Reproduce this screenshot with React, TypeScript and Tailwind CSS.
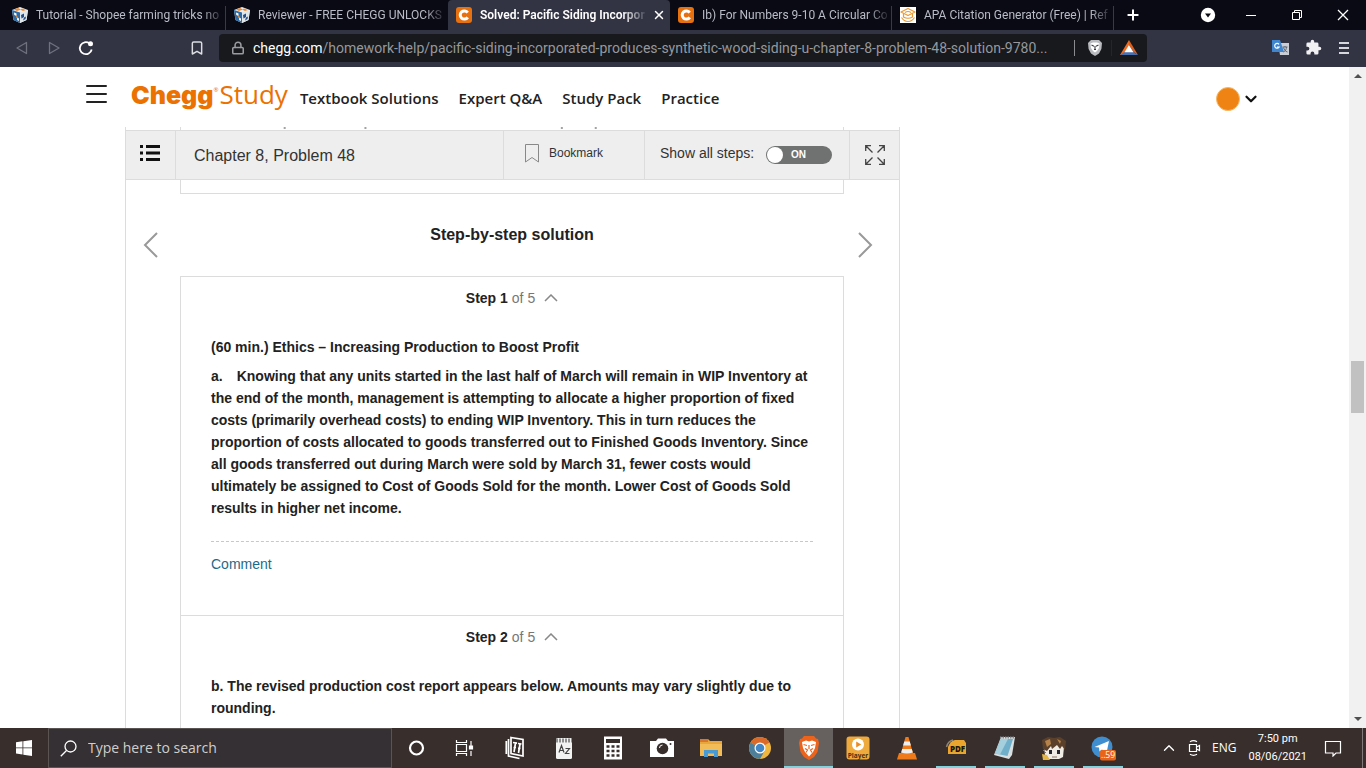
import React from "react";
import {
  Lock,
  Bookmark,
  ChevronUp,
  ChevronDown,
  X,
  Plus,
} from "lucide-react";

const ui = "font-['Open_Sans','Noto_Sans',sans-serif]";

function CubeIcon() {
  return (
    <svg viewBox="0 0 16 16" className="size-4 shrink-0" aria-hidden="true">
      <path d="M8 0L16 3L14.500 13L8 16L1.500 13L0 3z" fill="#e9eef2" />
      <path d="M0 3L8 5.500L8 16L1.500 13z" fill="#2d6ca6" />
      <path d="M8 5.500L16 3L14.500 13L8 16z" fill="#dfe6ea" />
      <path d="M2 2.500L6 1L9 2.500L5 4z" fill="#ef8a2c" />
      <path d="M10 1.500L14 3L11 4L8.500 2.700z" fill="#ef8a2c" />
      <path d="M2 5.500L4.500 6.500L4.500 9L2.300 8zM5 10.500L7 11.500L7 14L5 13z" fill="#fff" />
      <path d="M9 8L12 6.500L12 10L9.500 11.500zM12 10.500L14 9.500L13.500 12L11 13.500z" fill="#264d86" />
      <path d="M4 9L6 9.800L6 11.500L4 10.500z" fill="#ef8a2c" />
    </svg>
  );
}

function CheggIcon() {
  return (
    <svg viewBox="0 0 16 16" className="size-4 shrink-0" aria-hidden="true">
      <rect width="16" height="16" rx="3" fill="#e8710f" />
      <path d="M11.700 5.700A4.100 4.100 0 1 0 11.700 10.300" fill="none" stroke="#fff" strokeWidth="3" />
    </svg>
  );
}

function ScribbrIcon() {
  return (
    <svg viewBox="0 0 16 16" className="size-4 shrink-0" aria-hidden="true">
      <rect width="16" height="16" fill="#fff" />
      <g fill="none" stroke="#e99a35" strokeWidth="1.200" strokeLinejoin="round">
        <path d="M1 5L8 1.500L15 5L8 8.500z" />
        <path d="M5 5.500Q8 3.500 11 5.500M3.500 6.500v3.500Q8 12.500 12.500 10V6.500" />
        <path d="M1.500 10.500Q4 14.500 8 14.500Q12 14.500 14.500 10.500" />
      </g>
    </svg>
  );
}

const tabs = [
  { title: "Tutorial - Shopee farming tricks no", icon: <CubeIcon />, sep: true },
  { title: "Reviewer - FREE CHEGG UNLOCKS", icon: <CubeIcon />, sep: false },
  { title: "Solved: Pacific Siding Incorpor", icon: <CheggIcon />, active: true },
  { title: "Ib) For Numbers 9-10 A Circular Co", icon: <CheggIcon />, sep: true },
  { title: "APA Citation Generator (Free) | Ref", icon: <ScribbrIcon />, sep: true },
];

function TabStrip() {
  return (
    <div className="flex h-[30px] bg-[#0a0a15]">
      <div role="tablist" className="flex min-w-0">
        {tabs.map((t) => (
          <div
            key={t.title}
            className={
              t.active
                ? "flex w-[222px] min-w-0 items-center rounded-t bg-[#323444] pl-2 text-white"
                : "flex w-[222px] min-w-0 items-center pl-2 first:w-[226px] first:pl-3"
            }
          >
            <button role="tab" aria-selected={!!t.active} className="flex min-w-0 flex-1 items-center gap-2">
              {t.icon}
              <span
                className={
                  t.active
                    ? "flex-1 overflow-hidden whitespace-nowrap text-left font-['Roboto',sans-serif] text-[12px] font-semibold leading-5 [mask-image:linear-gradient(to_right,black_85%,transparent)]"
                    : "flex-1 overflow-hidden whitespace-nowrap text-left font-['Roboto',sans-serif] text-[12px] leading-5 text-[#b9bcc6] [mask-image:linear-gradient(to_right,black_88%,transparent)]"
                }
              >
                {t.title}
              </span>
            </button>
            {t.active ? (
              <button aria-label="Close tab" className="px-1">
                <X className="size-3.5" strokeWidth={2.5} />
              </button>
            ) : (
              <span className={t.sep ? "h-6 w-px self-end bg-[#3a3a42]" : "w-px"} />
            )}
          </div>
        ))}
      </div>
      <button aria-label="New tab" className="px-[11px] text-white">
        <Plus className="size-4" strokeWidth={3} />
      </button>
      <div className="flex flex-1 justify-end text-white">
        <button aria-label="Search tabs" className="px-3">
          <svg viewBox="0 0 16 16" className="size-4" aria-hidden="true">
            <circle cx="8" cy="8" r="7.200" fill="#fff" />
            <path d="M5 6.500h6L8 10.500z" fill="#0a0a15" />
          </svg>
        </button>
        <button aria-label="Minimize" className="flex w-[46px] items-center justify-center">
          <svg viewBox="0 0 12 12" className="size-3" aria-hidden="true"><path d="M1 6.500h10" stroke="#fff" /></svg>
        </button>
        <button aria-label="Restore" className="flex w-[46px] items-center justify-center">
          <svg viewBox="0 0 12 12" className="size-3" fill="none" stroke="#fff" aria-hidden="true">
            <path d="M1.500 3.500h7v7h-7zM3.500 3V1.500h7v7H9" />
          </svg>
        </button>
        <button aria-label="Close" className="flex w-[46px] items-center justify-center">
          <svg viewBox="0 0 12 12" className="size-3" aria-hidden="true"><path d="M1 1l10 10M11 1L1 11" stroke="#fff" strokeWidth="1.300" /></svg>
        </button>
      </div>
    </div>
  );
}

function AddressRow() {
  return (
    <div className="flex h-[37px] items-center bg-[#323444] pb-0.5">
      <div className="flex w-[219px] shrink-0 items-center pl-[14px]">
        <button aria-label="Back">
          <svg viewBox="0 0 16 16" className="size-4" aria-hidden="true"><path d="M12.500 2.500v11L3 8z" fill="none" stroke="#6f717e" strokeWidth="1.300" strokeLinejoin="round" /></svg>
        </button>
        <button aria-label="Forward" className="ml-4">
          <svg viewBox="0 0 16 16" className="size-4" aria-hidden="true"><path d="M3.500 2.500v11L13 8z" fill="none" stroke="#6f717e" strokeWidth="1.300" strokeLinejoin="round" /></svg>
        </button>
        <button aria-label="Reload" className="ml-4">
          <svg viewBox="0 0 16 16" className="size-4" aria-hidden="true">
            <path d="M11.500 3.400A6 6 0 1 0 13.700 9.500" fill="none" stroke="#fff" strokeWidth="1.800" />
            <circle cx="12.500" cy="3.800" r="2.500" fill="#fff" />
          </svg>
        </button>
        <button aria-label="Bookmark this page" className="ml-auto mr-[14px]">
          <Bookmark className="size-4 text-[#dcdde2]" strokeWidth={2.2} />
        </button>
      </div>
      <div className="flex h-7 min-w-0 max-w-[928px] flex-1 items-center rounded bg-[#17191d] pl-3 pr-[5px]">
        <Lock className="size-3.5 shrink-0 text-[#9a9ca2]" strokeWidth={2.6} />
        <span className="ml-2 min-w-0 flex-1 whitespace-nowrap font-['Roboto',sans-serif] text-[14px] leading-5 text-[#96989d]">
          <span className="text-white">chegg.com</span>
          /homework-help/pacific-siding-incorporated-produces-synthetic-wood-siding-u-chapter-8-problem-48-solution-9780...
        </span>
        <span className="mx-2 h-4 w-px bg-[#8b8c90]" />
        <button aria-label="Brave Shields" className="mx-1">
          <svg viewBox="0 0 16 18" className="h-[18px] w-4" aria-hidden="true">
            <path d="M4 1h8l3 3-.6 6L12 14.500 8 17 4 14.500 1.600 10 1 4z" fill="#b9bbc0" />
            <path d="M3.500 4.500L6 3.500h4l2.500 1L12 9l-2 3-2 1.500L6 12 4 9z" fill="#fff" />
            <path d="M4.500 6L7 7.200M11.500 6L9 7.200M7 10.500h2M8 7v3" stroke="#3a3c42" strokeWidth="1.100" />
          </svg>
        </button>
        <span className="mx-1 h-4 w-px bg-[#24262b]" />
        <button aria-label="Brave Rewards" className="mx-1">
          <svg viewBox="0 0 18 16" className="h-4 w-[18px]" aria-hidden="true">
            <path d="M9 0L0 15h9V5z" fill="#ef6b1f" />
            <path d="M9 0v5l4.500 7L18 15z" fill="#d9601f" />
            <path d="M0 15l4.500-3h9L18 15z" fill="#4a6fae" />
            <path d="M9 5l4.500 7.200h-9z" fill="#fff" />
          </svg>
        </button>
      </div>
      <div className="ml-auto flex items-center gap-4 pr-4">
        <button aria-label="Translate">
          <svg viewBox="0 0 17 17" className="size-[17px]" aria-hidden="true">
            <path d="M6 4h11v12H8z" fill="#c9ced6" />
            <path d="M0 1h8l4 12H0z" fill="#3f86cf" />
            <path d="M7 5.300A2.400 2.400 0 1 0 7.200 8H5" fill="none" stroke="#fff" strokeWidth="1.200" />
            <path d="M10.500 8h5M13 7v1M11.500 13c2-1 3-3 3-5M11.500 8.500c.5 2 2 4 4 4.500" fill="none" stroke="#5f6570" />
          </svg>
        </button>
        <button aria-label="Extensions">
          <svg viewBox="0 0 24 24" className="size-[17px]" fill="#f1f1f4" aria-hidden="true">
            <path d="M20.500 11H19V7a2 2 0 0 0-2-2h-4V3.500a2.500 2.500 0 0 0-5 0V5H4a2 2 0 0 0-2 2v3.800h1.500a2.700 2.700 0 0 1 0 5.400H2V20a2 2 0 0 0 2 2h3.800v-1.500a2.700 2.700 0 0 1 5.400 0V22H17a2 2 0 0 0 2-2v-4h1.500a2.500 2.500 0 0 0 0-5z" />
          </svg>
        </button>
        <button aria-label="Menu">
          <svg viewBox="0 0 12 14" className="h-[14px] w-3" aria-hidden="true"><path d="M1 2h10M1 7h10M1 12h10" stroke="#d7d8de" strokeWidth="1.800" /></svg>
        </button>
      </div>
    </div>
  );
}

function SiteHeader() {
  return (
    <header className={`flex h-[60px] shrink-0 items-center bg-white pl-[86px] pr-[89px] ${ui}`}>
      <button aria-label="Open menu">
        <svg viewBox="0 0 21 20" className="mb-1.5 h-5 w-[21px]" aria-hidden="true"><path d="M1 2h19M1 10h19M1 18h19" stroke="#222" strokeWidth="2" strokeLinecap="round" /></svg>
      </button>
      <a href="#home" className="ml-6 flex items-baseline pb-1.5 text-[26px] leading-8 text-[#eb7100]">
        <span className="font-['Inter',sans-serif] text-[25px] font-black">Chegg</span>
        <span className="w-[6px] self-start pt-1 text-[6px] leading-4">®</span>
        <span>Study</span>
      </a>
      <nav className="ml-3 flex gap-5 pt-0.5 text-[15px] font-semibold leading-6 text-[#222]">
        <a href="#textbooks">Textbook Solutions</a>
        <a href="#expert">Expert Q&amp;A</a>
        <a href="#pack">Study Pack</a>
        <a href="#practice">Practice</a>
      </nav>
      <button aria-label="Account" className="ml-auto flex items-center gap-0.5 pt-1">
        <span className="size-6 rounded-full border border-[#f5b766] bg-[#ef8414]" />
        <ChevronDown className="size-[18px] text-[#111]" strokeWidth={3} />
      </button>
    </header>
  );
}

function ProblemBar() {
  return (
    <div className="flex h-[50px] shrink-0 items-stretch border border-[#dcdcdc] bg-[#eeeeee] text-[#333]">
      <button aria-label="Table of contents" className="flex w-[50px] items-center justify-center border-r border-[#dcdcdc] pr-0.5">
        <svg viewBox="0 0 20 16" className="mb-1 h-4 w-5" aria-hidden="true">
          <path d="M0 1.500h3M0 8h3M0 14.500h3M6 1.500h14M6 8h14M6 14.500h14" stroke="#111" strokeWidth="3" />
        </svg>
      </button>
      <h1 className="flex flex-1 items-center pl-[18px] pt-0.5 text-[16px] leading-6">Chapter 8, Problem 48</h1>
      <button className="flex w-[141px] items-center border-l border-[#dcdcdc] pb-1 pl-[21px] text-[12px] leading-5">
        <svg viewBox="0 0 14 19" className="mr-[10px] h-[19px] w-[14px]" aria-hidden="true"><path d="M.5.500h13v17.500L7 13.500.5 18z" fill="none" stroke="#888" /></svg>
        Bookmark
      </button>
      <label className="flex w-[205px] items-center justify-between border-l border-[#dcdcdc] pl-[15px] pr-[17px] text-[14px] leading-5">
        <span className="pb-1">Show all steps:</span>
        <input type="checkbox" role="switch" defaultChecked className="peer sr-only" />
        <span className="flex h-[18px] w-[66px] items-center rounded-full bg-[#6f7271] p-px text-[10px] font-bold text-white">
          <span className="mr-2 size-4 rounded-full bg-white" />
          ON
        </span>
      </label>
      <button aria-label="Full screen" className="flex w-[50px] items-center justify-center border-l border-[#dcdcdc]">
        <svg viewBox="0 0 20 20" className="size-5" fill="none" stroke="#444" strokeWidth="1.300" aria-hidden="true">
          <path d="M7.500 7.500L.8.800M.7 6V.7H6M12.500 7.500L19.200.8M14 .7h5.300V6M7.500 12.500L.8 19.200M.7 14v5.300H6M12.500 12.500l6.700 6.700M14 19.300h5.300V14" />
        </svg>
      </button>
    </div>
  );
}

function StepHeading({ n }: { n: number }) {
  return (
    <h3 className="flex h-[42px] items-center justify-center">
      <button className="flex items-center text-[14px] font-normal leading-5 text-[#777]">
        <span className="mr-1 font-bold text-[#222]">Step {n}</span>of 5
        <svg viewBox="0 0 14 8" className="ml-[9px] h-2 w-[14px]" aria-hidden="true"><path d="M1 7l6-6 6 6" fill="none" stroke="#888" strokeWidth="1.500" /></svg>
      </button>
    </h3>
  );
}

const answer = [
  "the end of the month, management is attempting to allocate a higher proportion of fixed",
  "costs (primarily overhead costs) to ending WIP Inventory. This in turn reduces the",
  "proportion of costs allocated to goods transferred out to Finished Goods Inventory. Since",
  "all goods transferred out during March were sold by March 31, fewer costs would",
  "ultimately be assigned to Cost of Goods Sold for the month. Lower Cost of Goods Sold",
  "results in higher net income.",
];

function Page() {
  return (
    <main className="flex min-w-0 flex-1 flex-col overflow-hidden bg-white font-['Liberation_Sans',Arial,sans-serif]">
      <SiteHeader />
      <div className="ml-[125px] flex w-[775px] max-w-full flex-1 flex-col">
        <div className="h-[3px] shrink-0 border-x border-[#dcdcdc] pl-[54px] pr-[55px]">
          <div className="h-full border-x border-[#dcdcdc]">
            <svg viewBox="0 0 664 3" className="h-[3px] w-full" aria-hidden="true"><path d="M103 1h2M184 1h2M381 1h2M415 1h2" stroke="#444" /></svg>
          </div>
        </div>
        <ProblemBar />
        <div className="flex flex-1 items-start border-x border-[#dcdcdc]">
          <button aria-label="Previous problem" className="w-[54px] pl-[17px] pt-[52px]">
            <svg viewBox="0 0 15 26" className="h-[26px] w-[15px]" aria-hidden="true"><path d="M14 1L2 13l12 12" fill="none" stroke="#999" strokeWidth="2" /></svg>
          </button>
          <div className="min-w-0 flex-1 text-[14px] leading-[22px] text-[#222]">
            <div className="h-[14px] border-x border-b border-[#dcdcdc]" />
            <h2 className="pb-[29px] pt-[29px] text-center text-[16px] font-bold leading-6">Step-by-step solution</h2>
            <section className="border border-[#dcdcdc] px-[30px] pb-10 font-bold">
              <StepHeading n={1} />
              <p className="pt-[17px]">(60 min.) Ethics – Increasing Production to Boost Profit</p>
              <p className="whitespace-nowrap pb-[22px] pt-[7px]">
                a.<span className="ml-[14px]">Knowing that any units started in the last half of March will remain in WIP Inventory at</span>
                {answer.map((line) => (
                  <React.Fragment key={line}>
                    <br />
                    {line}
                  </React.Fragment>
                ))}
              </p>
              <div className="border-t border-dashed border-[#c8c8c8] pt-[11px] font-normal">
                <a href="#comment" className="text-[#1c6b8c]">Comment</a>
              </div>
            </section>
            <section className="border-x border-[#dcdcdc] px-[30px] pb-10 font-bold">
              <StepHeading n={2} />
              <p className="whitespace-nowrap pt-[17px]">
                b. The revised production cost report appears below. Amounts may vary slightly due to
                <br />
                rounding.
              </p>
            </section>
          </div>
          <button aria-label="Next problem" className="w-[55px] pl-[14px] pt-[52px]">
            <svg viewBox="0 0 15 26" className="h-[26px] w-[15px]" aria-hidden="true"><path d="M1 1l12 12L1 25" fill="none" stroke="#999" strokeWidth="2" /></svg>
          </button>
        </div>
      </div>
    </main>
  );
}

function Scrollbar() {
  return (
    <div className="flex w-[17px] shrink-0 flex-col items-center bg-[#f1f1f1] py-[6px]" aria-hidden="true">
      <svg viewBox="0 0 8 5" className="h-[5px] w-2"><path d="M0 5l4-4 4 4z" fill="#505050" /></svg>
      <div className="h-[283px] shrink-0" />
      <div className="h-[52px] w-[13px] shrink-0 bg-[#c1c1c1]" />
      <svg viewBox="0 0 8 5" className="mt-auto h-[5px] w-2"><path d="M0 0l4 4 4-4z" fill="#505050" /></svg>
    </div>
  );
}

const apps: { name: string; state?: "active" | "open"; art: React.ReactNode }[] = [
  { name: "Cortana", art: <circle cx="11.500" cy="12" r="6.500" fill="none" stroke="#fff" strokeWidth="2.200" /> },
  {
    name: "Task View",
    art: (
      <g fill="none" stroke="#fff" strokeWidth="1.200">
        <path d="M2.500 8.500h10v7h-10zM2.500 4v2.500h10V4M2.500 20v-2.500h10V20M17 5v5M17 15v5" />
        <path d="M15.500 10h3v3h-3z" fill="#fff" />
      </g>
    ),
  },
  {
    name: "Solitaire",
    art: (
      <g fill="none" stroke="#fff" strokeWidth="1.700">
        <path d="M8 1.500l12 2V20L8 17.500z" />
        <path d="M5.500 3v17l11 2.500M3.300 5v13" />
        <path d="M10 6.500l4 .6M12.500 7l-1.500 9M15 7.500l3.500.5M17 8l-1.500 9M10.500 11.500h2.500M15 12.300h2.500" />
      </g>
    ),
  },
  {
    name: "Dictionary",
    art: (
      <>
        <rect x="4" y="2" width="16" height="21" rx="1.500" fill="#f2f2f2" />
        <path d="M4 4.500h16" stroke="#8e8e8e" strokeWidth="4" strokeDasharray="2 1" />
        <path d="M7 16.500l2.500-7 2.500 7M8 14.500h3M13.500 12.500h4l-4 5h4" fill="none" stroke="#444" strokeWidth="1.200" />
      </>
    ),
  },
  {
    name: "Calculator",
    art: (
      <>
        <rect x="3" y="0.500" width="18" height="23" fill="#fff" />
        <path d="M5 5h14" stroke="#382f2d" strokeWidth="4" />
        <path d="M5.500 10.500h13M5.500 15h13M5.500 19.500h13" stroke="#382f2d" strokeWidth="2.500" strokeDasharray="3 2" />
      </>
    ),
  },
  {
    name: "Camera",
    art: (
      <>
        <path d="M0 5h6l2-2.500h8L18 5h6v16H0z" fill="#fff" />
        <circle cx="12.500" cy="12.500" r="5.800" fill="#382f2d" />
        <path d="M9.500 12a3 3 0 0 1 3-3" stroke="#fff" fill="none" />
        <circle cx="20.500" cy="8" r="1" fill="#382f2d" />
      </>
    ),
  },
  {
    name: "File Explorer",
    art: (
      <>
        <path d="M1 3h8l2 2h12v15H1z" fill="#e9a63a" />
        <path d="M1 3h8v3H1z" fill="#d9772e" />
        <path d="M1 8h22v12H1z" fill="#f2bd58" />
        <path d="M5 21v-7h14v7h-4v-3.500H9V21z" fill="#4a9bd4" />
      </>
    ),
  },
  {
    name: "Chrome",
    art: (
      <>
        <circle cx="12" cy="12" r="11" fill="#f0b73f" />
        <path d="M12 12L2.500 6.500A11 11 0 0 1 21.500 6.500z" fill="#d96a2b" />
        <path d="M12 12L2.500 6.500A11 11 0 0 0 12 23l4.500-8z" fill="#4d7f9a" />
        <circle cx="12" cy="12" r="5.500" fill="#fff" />
        <circle cx="12" cy="12" r="4.300" fill="#4387c7" />
      </>
    ),
  },
  {
    name: "Brave",
    state: "active",
    art: (
      <>
        <path d="M7 0h10l2 2.500 2 .5 1 4-1.500 9L17 21l-5 3-5-3-3.500-5L2 7l1-4 2-.5z" fill="#ec641c" />
        <path d="M5 6l4-1.500 3 1 3-1L19 6l-1 6-2 4-4 4.500L8 16l-2-4z" fill="#fff" />
        <path d="M6.500 8.500l3.500 1M17.500 8.500l-3.500 1M12 9v4M8 12.500l2.500 1.500L9 16.500M16 12.500L13.500 14l1.500 2.500" stroke="#ec641c" strokeWidth="1.200" fill="none" />
      </>
    ),
  },
  {
    name: "Media Player",
    art: (
      <>
        <rect x="0.500" y="0.500" width="23" height="23" rx="3" fill="#efaa3d" />
        <circle cx="12" cy="8.500" r="6" fill="#fff" />
        <path d="M10.200 5.500v6l5-3z" fill="#ee8b20" />
        <text x="12" y="21.500" textAnchor="middle" fontSize="6.500" fontWeight="700" fill="#4b3210">Player</text>
      </>
    ),
  },
  {
    name: "VLC",
    art: (
      <>
        <path d="M4 17h16l2 6.500H2z" fill="#ee7a1a" />
        <path d="M10.500 1h3l5 18q-6.500 3-13 0z" fill="#ee7a1a" />
        <path d="M9.300 5.500h5.400l1.200 4H8.100zM7.200 13h9.600l1 3.500q-6 2-11.600 0z" fill="#eee" />
      </>
    ),
  },
  {
    name: "PDF",
    state: "open",
    art: (
      <>
        <path d="M4 11Q6 5 11 4h9l2 3v11H4z" fill="#e9a52e" />
        <path d="M2.500 11Q4 5 9 4" stroke="#8d8578" strokeWidth="1.500" fill="none" />
        <text x="13.500" y="16" textAnchor="middle" fontSize="8" fontWeight="800" fill="#1c150c">PDF</text>
      </>
    ),
  },
  {
    name: "Notepad",
    state: "open",
    art: (
      <>
        <path d="M8 1h14l-3 18-3 4L1 19z" fill="#d8dfe1" />
        <path d="M8 3h12L14.500 20 2 17.500z" fill="#70afc9" />
        <path d="M8 3h7L7 18.500l-5-1z" fill="#a5cfdd" />
        <path d="M7 1.500h15" stroke="#7e8b90" strokeWidth="2" strokeDasharray="1.500 1" />
      </>
    ),
  },
  {
    name: "Game",
    state: "open",
    art: (
      <>
        <path d="M2 10l4-3h13l3 4-1 10-4 2H6l-3-4z" fill="#f0ece6" />
        <path d="M1 13L0 4l6-3 6 1 6-1 6 4-1 9-3-4-2 3-3-4-5 4-1-3-4 5z" fill="#5b412b" />
        <path d="M3 5l5-2 1 5-4 3zM15 3l4 2-1 3z" fill="#b58349" />
        <path d="M7 14h3v4H7zM15 14h3v4h-3z" fill="#262a30" />
        <path d="M10 21h5M1 14l3 3" stroke="#8a7665" />
        <path d="M0 18l5 1 3 5H1z" fill="#e3b647" />
      </>
    ),
  },
  {
    name: "Telegram",
    state: "open",
    art: (
      <>
        <circle cx="11" cy="11" r="10.500" fill="#3f8fd0" />
        <path d="M3.500 11L18 5l-2.500 12-4.500-3.500-2.500 2-.5-4z" fill="#fff" />
        <rect x="9" y="14" width="16" height="10.500" rx="2" fill="#e8641b" />
        <text x="17" y="22" textAnchor="middle" fontSize="8.500" fill="#fff">..59</text>
      </>
    ),
  },
];

function Taskbar() {
  return (
    <footer className={`flex h-10 shrink-0 items-stretch bg-[#382f2d] text-white ${ui}`}>
      <button aria-label="Start" className="flex w-12 shrink-0 items-center justify-center">
        <svg viewBox="0 0 16 16" className="size-4" fill="#fff" aria-hidden="true">
          <path d="M0 2.200L6.500 1.300V7.500H0zM7.300 1.200L16 0v7.500H7.300zM0 8.300h6.500v6.200L0 13.600zM7.300 8.300H16V16l-8.700-1.200z" />
        </svg>
      </button>
      <label className="flex w-[344px] items-center border border-[#5a5453] bg-[#343033] pl-[11px]">
        <svg viewBox="0 0 17 17" className="size-[17px] shrink-0" fill="none" stroke="#fff" strokeWidth="1.300" aria-hidden="true">
          <circle cx="10.500" cy="6.500" r="5.500" />
          <path d="M6.500 10.500L.8 16.200" />
        </svg>
        <input
          aria-label="Search"
          placeholder="Type here to search"
          className="ml-[11px] min-w-0 flex-1 bg-transparent text-[14px] leading-5 outline-none placeholder:text-[#d2cecb]"
        />
      </label>
      <div className="flex">
        {apps.map((a) => (
          <button
            key={a.name}
            aria-label={a.name}
            className={
              a.state === "active"
                ? "flex w-[49px] flex-col items-center bg-[#66615f]"
                : "flex w-[49px] flex-col items-center"
            }
          >
            <span className="flex flex-1 items-center pt-0.5">
              <svg viewBox="0 0 24 24" className="size-6 overflow-visible" aria-hidden="true">{a.art}</svg>
            </span>
            <span className={a.state === "active" ? "h-0.5 w-full bg-[#7fd3dc]" : a.state === "open" ? "h-0.5 w-10 bg-[#7fd3dc]" : "h-0.5 w-10"} />
          </button>
        ))}
      </div>
      <div className="ml-auto flex items-center">
        <button aria-label="Show hidden icons"><ChevronUp className="size-[18px]" strokeWidth={1.8} /></button>
        <button aria-label="Meet Now" className="ml-2">
          <svg viewBox="0 0 16 18" className="h-[18px] w-4" fill="none" stroke="#fff" strokeWidth="1.200" aria-hidden="true">
            <path d="M3.500 5.500h7v7h-7zM10.500 8l3-1.500v5l-3-1.500M4 2.700q3.500-2 7 0M4 15.300q3.500 2 7 0" />
          </svg>
        </button>
        <span className="ml-[10px] text-[12px] leading-5">ENG</span>
        <span className="ml-3 text-center font-['Roboto',sans-serif] text-[11px] leading-[18px]">
          <time className="block">7:50 pm</time>
          <time className="block">08/06/2021</time>
        </span>
        <button aria-label="Notifications" className="ml-[17px] mr-5">
          <svg viewBox="0 0 18 18" className="size-[18px]" fill="none" stroke="#fff" strokeWidth="1.200" aria-hidden="true">
            <path d="M1.500 2.500h15v11.500H12l-3 3v-3H1.500z" />
          </svg>
        </button>
        <span className="mr-[3px] h-10 w-px bg-[#80797a]" />
      </div>
    </footer>
  );
}

export default function App() {
  return (
    <div className="flex h-screen flex-col overflow-hidden bg-white">
      <div className={`shrink-0 ${ui}`}>
        <TabStrip />
        <AddressRow />
      </div>
      <div className="flex min-h-0 flex-1">
        <Page />
        <Scrollbar />
      </div>
      <Taskbar />
    </div>
  );
}
